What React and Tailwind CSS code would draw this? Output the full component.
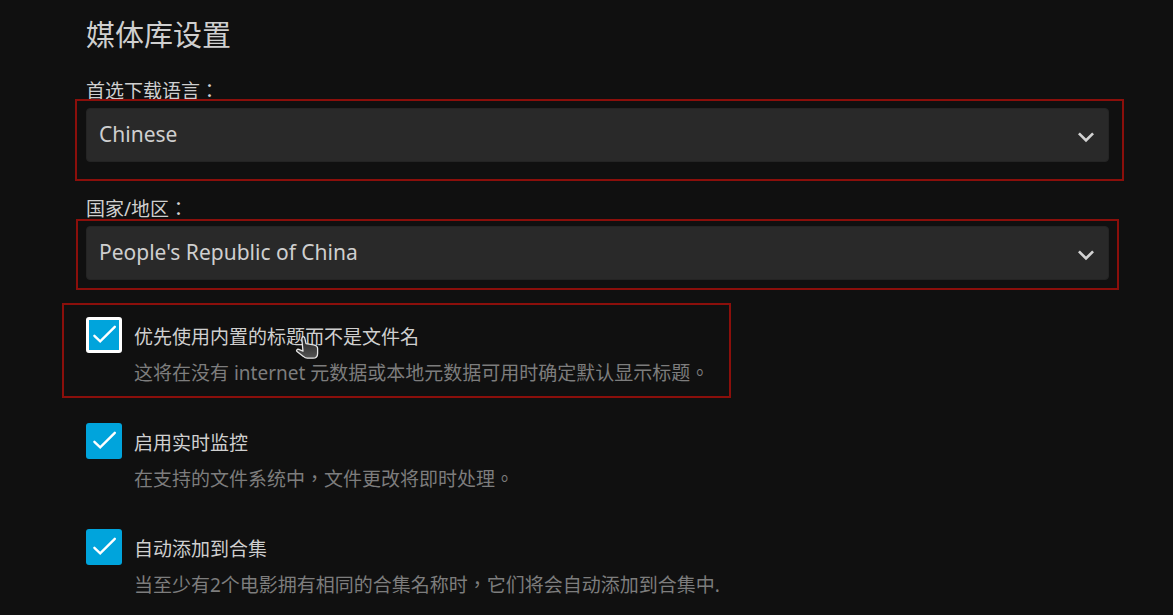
const outline = "pointer-events-none absolute border-2 border-[#8b0f0b]";

function SelectField({ id, label, options, mark }) {
  return (
    <div className="relative mb-8">
      <label htmlFor={id} className="block h-8 pt-px text-[19px] leading-7">
        {label}
      </label>
      <div className="relative">
        <select
          id={id}
          className="block h-[54px] w-full appearance-none rounded-[4px] border border-[#242424] bg-[#292929] pl-3 pr-12 text-[21px] text-[#cfcfcf] outline-none"
        >
          {options.map((o) => (
            <option key={o}>{o}</option>
          ))}
        </select>
        <svg
          viewBox="0 0 24 24"
          className="pointer-events-none absolute right-[7px] top-[13px] h-8 w-8 fill-[#d2d2d2]"
          aria-hidden="true"
        >
          <path d="M16.59 8.59 12 13.17 7.41 8.59 6 10l6 6 6-6z" />
        </svg>
      </div>
      <div className={`${outline} ${mark}`} />
    </div>
  );
}

function CheckField({ id, title, description, focused, children }) {
  return (
    <div className="relative flex h-[106px] items-start gap-3">
      <div className="relative h-9 w-9 shrink-0">
        <input
          id={id}
          type="checkbox"
          defaultChecked
          aria-describedby={`${id}-desc`}
          className={`block h-9 w-9 appearance-none rounded-[3px] bg-[#00a4dc] outline-none ${
            focused ? "border-[3px] border-white" : ""
          }`}
        />
        <svg
          viewBox="0 0 36 36"
          className="pointer-events-none absolute inset-0 h-9 w-9 fill-none stroke-white stroke-[2.4]"
          strokeLinecap="round"
          aria-hidden="true"
        >
          <path d="M8.4 18.8 14.2 24.4 28.8 9.8" />
        </svg>
      </div>
      <div className="min-w-0 text-[19px]">
        <label htmlFor={id} className="block h-9 pt-1.5 leading-7">
          {title}
        </label>
        <p id={`${id}-desc`} className="pt-1.5 leading-7 text-[#7d7d7d]">
          {description}
        </p>
      </div>
      {children}
    </div>
  );
}

function HandPointer({ className }) {
  return (
    <svg viewBox="0 0 24 26" className={className} aria-hidden="true">
      <defs>
        <linearGradient id="hand" x1="0" y1="0" x2="0" y2="1">
          <stop offset="0" stopColor="#222" />
          <stop offset="1" stopColor="#555" />
        </linearGradient>
      </defs>
      <path
        d="M7.2 2.2C8.2 1.2 9.6 2 9.8 3.2L11 8.6 18.5 9.8C21.6 10.3 22.6 11.4 22.6 13.6V18.4C22.6 21.6 21 23.2 18 23.2H12.4C10.6 23.2 9.6 22.6 8.4 21.4L2 16.6C.8 15.4 2.2 13.8 3.8 14.4L8 16.2 6.8 4Z"
        fill="url(#hand)"
        stroke="#e6e6e6"
        strokeWidth="1.3"
        strokeLinejoin="round"
      />
    </svg>
  );
}

export default function App() {
  return (
    <main
      lang="zh-Hant"
      className="min-h-screen overflow-x-hidden bg-[#101010] pl-[86px] pr-16 pt-3.5 font-['Noto_Sans','Noto_Sans_CJK_TC',sans-serif] text-[#cfcfcf]"
    >
      <form>
        <h2 className="mb-5 text-[29px] font-normal leading-[42px]">媒体库设置</h2>
        <SelectField
          id="language"
          label="首选下载语言："
          options={["Chinese", "English"]}
          mark="-left-[11px] -right-[15px] top-[23px] -bottom-[19px]"
        />
        <SelectField
          id="country"
          label="国家/地区："
          options={["People's Republic of China", "United States"]}
          mark="-left-2.5 -right-2.5 top-[25px] -bottom-2.5"
        />
        <div className="pt-[5px]">
          <CheckField
            id="embedded-titles"
            title="优先使用内置的标题而不是文件名"
            description="这将在没有 internet 元数据或本地元数据可用时确定默认显示标题。"
            focused
          >
            <div className={`${outline} -left-6 -top-3.5 h-[95px] w-[669px]`} />
            <HandPointer className="pointer-events-none absolute left-[209px] top-[18px] h-[26px] w-6" />
          </CheckField>
          <CheckField
            id="realtime"
            title="启用实时监控"
            description="在支持的文件系统中，文件更改将即时处理。"
          />
          <CheckField
            id="collections"
            title="自动添加到合集"
            description="当至少有2个电影拥有相同的合集名称时，它们将会自动添加到合集中."
          />
        </div>
      </form>
    </main>
  );
}
